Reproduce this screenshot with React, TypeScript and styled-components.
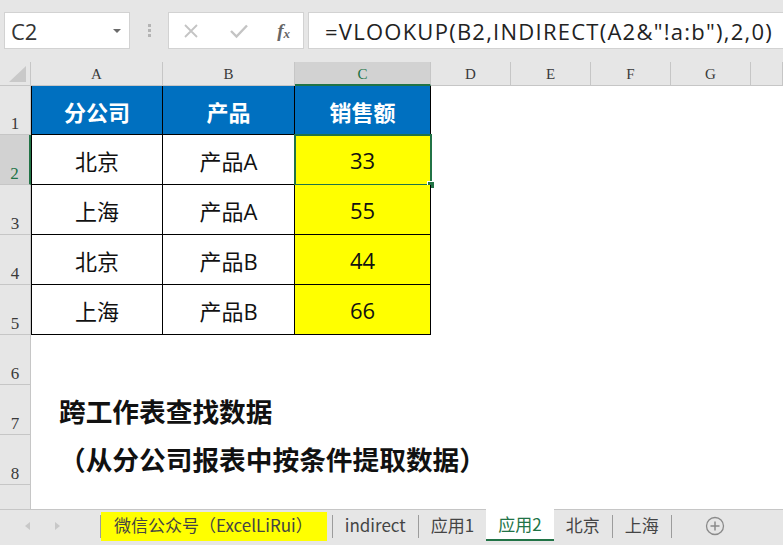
import React from "react";
import styled, { createGlobalStyle } from "styled-components";

const GlobalStyle = createGlobalStyle`
  html, body {
    margin: 0;
    padding: 0;
    background: #e6e6e6;
  }
  body {
    width: 783px;
    height: 545px;
    overflow: hidden;
    font-family: "Open Sans", "Noto Sans CJK SC", sans-serif;
  }
`;

const UI_FONT = `"Open Sans", "Noto Sans CJK SC", sans-serif`;
const HEAD_FONT = `"Liberation Serif", "Noto Sans CJK SC", serif`;

const columns = [
  { key: "A", width: 132 },
  { key: "B", width: 132 },
  { key: "C", width: 136 },
  { key: "D", width: 80 },
  { key: "E", width: 80 },
  { key: "F", width: 80 },
  { key: "G", width: 80 },
  { key: "H", width: 32 },
];

const rowHeights = [49, 50, 50, 50, 50, 50, 50, 50, 29];

const header = ["分公司", "产品", "销售额"];
const data = [
  ["北京", "产品A", "33"],
  ["上海", "产品A", "55"],
  ["北京", "产品B", "44"],
  ["上海", "产品B", "66"],
];

// free text typed into column A below the table
const notes: Record<number, { text: string; top: number }> = {
  6: { text: "跨工作表查找数据", top: 6 },
  7: { text: "（从分公司报表中按条件提取数据）", top: 4 },
};

const tabs = [
  { label: "indirect" },
  { label: "应用1" },
  { label: "应用2", active: true },
  { label: "北京" },
  { label: "上海" },
];

const App = () => {
  return (
    <>
      <GlobalStyle />
      <Page>
        <Toolbar>
          <NameBox>
            <span>C2</span>
            <DropCaret />
          </NameBox>
          <Grip>
            <i />
            <i />
            <i />
          </Grip>
          <FxBox>
            <svg width="18" height="18" viewBox="0 0 18 18">
              <path
                d="M3 3 L15 15 M15 3 L3 15"
                stroke="#c4c4c4"
                strokeWidth="1.8"
                fill="none"
              />
            </svg>
            <svg width="22" height="18" viewBox="0 0 22 18">
              <path
                d="M3 9 L8.5 14.5 L19 3.5"
                stroke="#c4c4c4"
                strokeWidth="2.4"
                fill="none"
              />
            </svg>
            <FxLabel>
              f<sub>x</sub>
            </FxLabel>
          </FxBox>
          <FormulaBox>=VLOOKUP(B2,INDIRECT(A2&amp;"!a:b"),2,0)</FormulaBox>
        </Toolbar>

        <Sheet>
          <Corner>
            <svg width="22" height="20" viewBox="0 0 22 20">
              <polygon points="20,2 20,18 3,18" fill="#c9c9c9" />
            </svg>
          </Corner>
          {columns.map((c) => (
            <ColHead key={c.key} $active={c.key === "C"}>
              {c.key !== "H" ? c.key : ""}
            </ColHead>
          ))}

          {rowHeights.map((_, r) => (
            <React.Fragment key={r}>
              <RowHead $active={r === 1}>{r < 8 ? r + 1 : ""}</RowHead>
              {columns.map((c, ci) => {
                if (r === 0 && ci < 3) {
                  return (
                    <TableCell key={c.key} $first={ci === 0} $fill="#0070c0" $head>
                      {header[ci]}
                    </TableCell>
                  );
                }
                if (r >= 1 && r <= 4 && ci < 3) {
                  return (
                    <TableCell
                      key={c.key}
                      $first={ci === 0}
                      $fill={ci === 2 ? "#ffff00" : "#ffffff"}
                    >
                      {data[r - 1][ci]}
                      {r === 1 && ci === 2 && (
                        <Selection>
                          <FillHandle />
                        </Selection>
                      )}
                    </TableCell>
                  );
                }
                if (ci === 0 && notes[r]) {
                  return (
                    <Cell key={c.key}>
                      <Note $top={notes[r].top}>{notes[r].text}</Note>
                    </Cell>
                  );
                }
                return <Cell key={c.key} />;
              })}
            </React.Fragment>
          ))}
        </Sheet>

        <TabBar>
          <Arrows>
            <svg width="8" height="10" viewBox="0 0 8 10">
              <polygon points="6,1 6,9 1,5" fill="#c8c8c8" />
            </svg>
            <svg width="8" height="10" viewBox="0 0 8 10">
              <polygon points="2,1 2,9 7,5" fill="#c8c8c8" />
            </svg>
          </Arrows>
          <Divider />
          <Tab $fill="#ffff00" $wide>
            微信公众号（ExcelLiRui）
          </Tab>
          {tabs.map((t, i) => (
            <React.Fragment key={t.label}>
              {!t.active && !tabs[i - 1]?.active && <Divider />}
              <Tab $active={t.active}>{t.label}</Tab>
            </React.Fragment>
          ))}
          <Divider />
          <AddSheet>
            <svg width="20" height="20" viewBox="0 0 20 20">
              <circle cx="10" cy="10" r="8.5" stroke="#8a8a8a" strokeWidth="1.3" fill="none" />
              <path d="M10 5.5 V14.5 M5.5 10 H14.5" stroke="#8a8a8a" strokeWidth="1.5" />
            </svg>
          </AddSheet>
        </TabBar>
      </Page>
    </>
  );
};

export default App;

const Page = styled.div`
  width: 783px;
  height: 545px;
  display: flex;
  flex-direction: column;
  background: #e6e6e6;
`;

const Toolbar = styled.div`
  height: 62px;
  display: flex;
  align-items: flex-start;
  padding: 12px 0 0 4px;
  box-sizing: border-box;
`;

const NameBox = styled.div`
  width: 126px;
  height: 37px;
  background: #fff;
  border: 1px solid #d2d2d2;
  box-sizing: border-box;
  display: flex;
  align-items: center;
  justify-content: space-between;
  padding: 0 8px 0 6px;
  font-family: ${UI_FONT};
  font-size: 22px;
  color: #333;
`;

const DropCaret = styled.i`
  width: 0;
  height: 0;
  border-left: 4px solid transparent;
  border-right: 4px solid transparent;
  border-top: 4px solid #6a6a6a;
`;

const Grip = styled.div`
  width: 38px;
  height: 37px;
  display: flex;
  flex-direction: column;
  align-items: center;
  justify-content: center;
  gap: 2px;
  i {
    width: 3px;
    height: 3px;
    background: #b4b4b4;
  }
`;

const FxBox = styled.div`
  width: 136px;
  height: 37px;
  background: #fff;
  border: 1px solid #d2d2d2;
  box-sizing: border-box;
  display: flex;
  align-items: center;
  justify-content: space-between;
  padding: 0 13px 0 13px;
`;

const FxLabel = styled.span`
  font-family: "Liberation Serif", serif;
  font-style: italic;
  font-weight: bold;
  font-size: 19px;
  color: #666;
  sub {
    font-size: 13px;
    vertical-align: -1px;
  }
`;

const FormulaBox = styled.div`
  margin-left: 4px;
  flex: 1;
  height: 37px;
  background: #fff;
  border: 1px solid #d2d2d2;
  border-right: none;
  box-sizing: border-box;
  display: flex;
  align-items: center;
  padding-left: 16px;
  font-family: ${UI_FONT};
  font-size: 22px;
  letter-spacing: 1.25px;
  color: #222;
  white-space: nowrap;
  overflow: hidden;
`;

const Sheet = styled.div`
  height: 452px;
  display: grid;
  grid-template-columns: 31px ${columns.map((c) => `${c.width}px`).join(" ")};
  grid-template-rows: 24px ${rowHeights.map((h) => `${h}px`).join(" ")};
  background: #fff;
  overflow: hidden;
`;

const Corner = styled.div`
  background: #e6e6e6;
  border-right: 1px solid #c6c6c6;
  border-bottom: 1px solid #c6c6c6;
  box-sizing: border-box;
  display: flex;
  align-items: flex-end;
  justify-content: flex-end;
  padding: 0 2px 1px 0;
`;

const ColHead = styled.div<{ $active?: boolean }>`
  background: ${(p) => (p.$active ? "#d2d2d2" : "#e6e6e6")};
  border-right: 1px solid #c6c6c6;
  border-bottom: ${(p) => (p.$active ? "2px solid #217346" : "1px solid #c6c6c6")};
  box-sizing: border-box;
  display: flex;
  align-items: center;
  justify-content: center;
  font-family: ${HEAD_FONT};
  font-size: 15px;
  color: ${(p) => (p.$active ? "#217346" : "#3a3a3a")};
  padding-top: 3px;
`;

const RowHead = styled.div<{ $active?: boolean }>`
  background: ${(p) => (p.$active ? "#d2d2d2" : "#e6e6e6")};
  border-right: ${(p) => (p.$active ? "2px solid #217346" : "1px solid #c6c6c6")};
  border-bottom: 1px solid #c6c6c6;
  box-sizing: border-box;
  display: flex;
  align-items: flex-end;
  justify-content: center;
  font-family: ${HEAD_FONT};
  font-size: 17px;
  color: ${(p) => (p.$active ? "#217346" : "#3a3a3a")};
`;

const Cell = styled.div`
  position: relative;
  min-width: 0;
`;

const TableCell = styled.div<{ $fill: string; $first?: boolean; $head?: boolean }>`
  position: relative;
  background: ${(p) => p.$fill};
  border-right: 1px solid #000;
  border-bottom: 1px solid #000;
  border-left: ${(p) => (p.$first ? "1px solid #000" : "none")};
  box-sizing: border-box;
  display: flex;
  align-items: center;
  justify-content: center;
  padding-top: 2px;
  font-family: ${UI_FONT};
  font-size: 22px;
  font-weight: ${(p) => (p.$head ? 700 : 400)};
  color: ${(p) => (p.$head ? "#fff" : "#111")};
`;

const Selection = styled.div`
  position: absolute;
  inset: -1px -2px -2px -1px;
  border: 2px solid #217346;
  pointer-events: none;
`;

const FillHandle = styled.div`
  position: absolute;
  right: -5px;
  bottom: -5px;
  width: 6px;
  height: 6px;
  background: #217346;
  border: 1px solid #fff;
`;

const Note = styled.div<{ $top: number }>`
  position: absolute;
  z-index: 1;
  left: 28px;
  top: ${(p) => p.$top}px;
  white-space: nowrap;
  font-family: "Noto Sans CJK SC", sans-serif;
  font-size: 26.7px;
  font-weight: 700;
  color: #111;
`;

const TabBar = styled.div`
  flex: 1;
  display: flex;
  align-items: stretch;
  border-top: 1px solid #c6c6c6;
  background: #e6e6e6;
  font-family: "Noto Sans CJK SC", ${UI_FONT};
  font-size: 17px;
  color: #444;
  padding-bottom: 4px;
`;

const Arrows = styled.div`
  width: 100px;
  display: flex;
  align-items: center;
  gap: 21px;
  padding-left: 24px;
  box-sizing: border-box;
`;

const Divider = styled.div`
  width: 1px;
  background: #9c9c9c;
  margin: 5px 0 3px;
`;

const Tab = styled.div<{ $active?: boolean; $fill?: string; $wide?: boolean }>`
  display: flex;
  align-items: center;
  padding: ${(p) => (p.$wide ? "0 14px 0 13px" : "0 12px")};
  margin-right: ${(p) => (p.$wide ? "5px" : "0")};
  background: ${(p) => (p.$active ? "#fff" : p.$fill ?? "transparent")};
  color: ${(p) => (p.$active ? "#217346" : "#444")};
  border-bottom: ${(p) => (p.$active ? "2px solid #217346" : "2px solid transparent")};
  margin-top: ${(p) => (p.$active ? "-1px" : "2px")};
  white-space: nowrap;
  padding-bottom: 2px;
`;

const AddSheet = styled.div`
  display: flex;
  align-items: center;
  margin-left: 33px;
`;
